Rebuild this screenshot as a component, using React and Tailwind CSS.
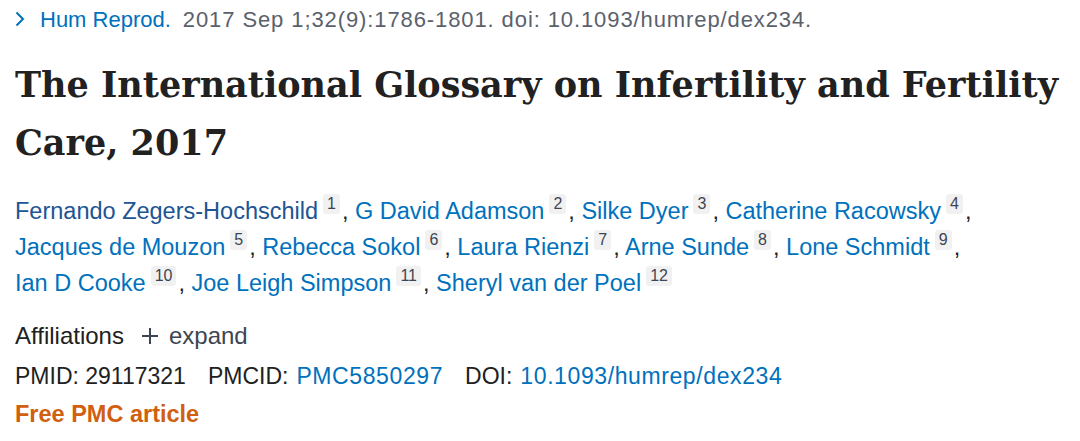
import React from "react";

const authorLines = [
  [
    ["Fernando Zegers-Hochschild", "1", true],
    ["G David Adamson", "2"],
    ["Silke Dyer", "3"],
    ["Catherine Racowsky", "4"],
  ],
  [
    ["Jacques de Mouzon", "5"],
    ["Rebecca Sokol", "6"],
    ["Laura Rienzi", "7"],
    ["Arne Sunde", "8"],
    ["Lone Schmidt", "9"],
  ],
  [
    ["Ian D Cooke", "10"],
    ["Joe Leigh Simpson", "11"],
    ["Sheryl van der Poel", "12"],
  ],
];

function Author({ name, sup, visited, last }) {
  return (
    <span>
      <a className={visited ? "text-[#205493]" : "text-[#0071bc]"}>{name}</a>
      <sup className="ml-[5px] -top-[10px] inline-block rounded-[3px] bg-[#f1f1f1] px-[4px] text-[16px] leading-[20px] text-[#3d4551]">
        {sup}
      </sup>
      {!last && <span className="text-[#212121] ml-[2px]">, </span>}
    </span>
  );
}

export default function App() {
  return (
    <div className="w-[1080px] h-[441px] bg-white px-[15px] font-['Liberation_Sans',Arial,sans-serif] overflow-hidden">
      <div className="pt-[2px] h-[36px] flex items-center text-[22px] text-[#5b616b]">
        <svg className="w-[13px] h-[16px] mr-[12px]" viewBox="0 0 13 16" fill="none">
          <path d="M1.5 1.5 L8 8 L1.5 14.5" stroke="#0071bc" strokeWidth="2" />
        </svg>
        <a className="text-[#0071bc] mr-[12px]">Hum Reprod.</a>
        <span className="tracking-[0.9px]">2017 Sep 1;32(9):1786-1801. doi: 10.1093/humrep/dex234.</span>
      </div>

      <h1 className="mt-[20px] font-['DejaVu_Serif',serif] font-bold text-[35px] leading-[58px] text-[#212121]">
        The International Glossary on Infertility and Fertility
        <br />
        Care, 2017
      </h1>

      <div className="mt-[21px] text-[23.5px] leading-[36px]">
        {authorLines.map((line, i) => (
          <div key={i}>
            {line.map(([name, sup, visited], j) => (
              <Author
                key={j}
                name={name}
                sup={sup}
                visited={visited}
                last={i === authorLines.length - 1 && j === line.length - 1}
              />
            ))}
          </div>
        ))}
      </div>

      <div className="mt-[15px] flex items-center h-[40px] text-[24px] text-[#212121]">
        <span>Affiliations</span>
        <svg className="ml-[17px] w-[18px] h-[18px]" viewBox="0 0 18 18" fill="none">
          <path d="M9 1 V17 M1 9 H17" stroke="#3d4551" strokeWidth="2" />
        </svg>
        <span className="ml-[10px] text-[#3d4551]">expand</span>
      </div>
      <div className="flex items-center h-[40px] text-[23px] text-[#212121]">
        <span>PMID: 29117321</span>
        <span className="ml-[22px]">PMCID:</span>
        <a className="ml-[8px] text-[#0071bc] tracking-[0.6px]">PMC5850297</a>
        <span className="ml-[22px]">DOI:</span>
        <a className="ml-[8px] text-[#0071bc] tracking-[0.6px]">10.1093/humrep/dex234</a>
      </div>
      <div className="h-[37px] flex items-center text-[23.5px] font-bold text-[#d0600e]">
        Free PMC article
      </div>
    </div>
  );
}
